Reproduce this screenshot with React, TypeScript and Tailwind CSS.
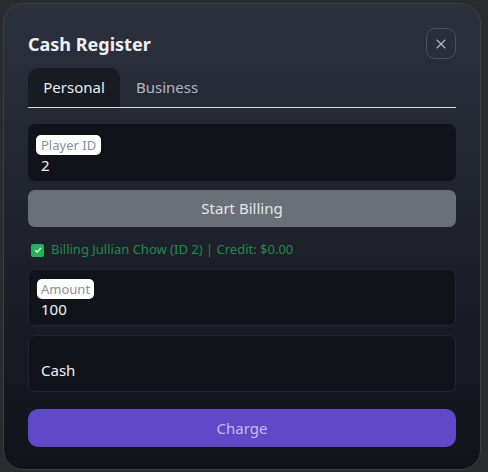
import React from "react";
import { X } from "lucide-react";

export default function App() {
  return (
    <div
      className="w-[488px] h-[472px] bg-[#2a2b2d] p-[3px] pr-[7px] pb-[2px]"
      style={{ fontFamily: '"Noto Sans", "Open Sans", sans-serif' }}
    >
      <div className="h-full rounded-[20px] border border-[#3a3e48] bg-gradient-to-b from-[#2c313e] to-[#11131a] px-6 pt-[24px] text-white">
        {/* Kopf */}
        <div className="flex items-center justify-between">
          <h1 className="text-[18px] font-bold leading-[26px] text-[#eef0f3]">Cash Register</h1>
          <button className="w-[30px] h-[31px] rounded-[9px] border border-[#4b505d] flex items-center justify-center text-[#b9bdc6]">
            <X className="w-4 h-4" strokeWidth={1.6} />
          </button>
        </div>

        {/* Reiter */}
        <div className="mt-[9px] flex items-end border-b border-[#d9dbe0]">
          <div className="w-[92px] h-[39px] rounded-t-[10px] bg-[#181b22] flex items-center justify-center text-[15px] text-[#eceef1]">
            Personal
          </div>
          <div className="px-4 h-[39px] flex items-center text-[15px] text-[#b3b7c0]">Business</div>
        </div>

        {/* Spieler-ID */}
        <div className="mt-4 h-[57px] rounded-[7px] bg-[#10131a] px-2 pt-2">
          <span className="inline-block rounded-[5px] bg-white px-[5px] text-[13px] leading-[20px] text-[#8a8f98]">Player ID</span>
          <div className="pl-[5px] text-[15px] leading-[18px] text-[#f2f3f5]">2</div>
        </div>

        <button className="mt-[9px] w-full h-[37px] rounded-[7px] bg-[#6a7077] text-[15px] text-[#e4e6e9]">
          Start Billing
        </button>

        <div className="mt-[14px] h-[18px] flex items-center gap-[7px] pl-[3px] text-[13px] text-[#1f8a4f]">
          <span className="w-[13px] h-[13px] rounded-[2px] bg-[#22b45a] flex items-center justify-center">
            <svg viewBox="0 0 12 12" className="w-[10px] h-[10px]">
              <path d="M2.5 6.2 5 8.5 9.5 3.5" fill="none" stroke="white" strokeWidth="1.6" />
            </svg>
          </span>
          <span>Billing Jullian Chow (ID 2) | Credit: $0.00</span>
        </div>

        {/* Betrag */}
        <div className="mt-[10px] h-[57px] rounded-[7px] border border-[#23262e] bg-[#10131a] px-2 pt-[6px]">
          <span className="inline-block rounded-[5px] bg-white px-[4px] text-[13px] leading-[20px] text-[#8a8f98]">Amount</span>
          <div className="pl-[4px] text-[15px] leading-[18px] text-[#f2f3f5]">100</div>
        </div>

        {/* Zahlungsart */}
        <div className="mt-[9px] h-[57px] rounded-[7px] border border-[#23262e] bg-[#10131a] px-3 flex items-end pb-[10px]">
          <span className="text-[15px] text-[#f2f3f5]">Cash</span>
        </div>

        <button className="mt-[17px] w-full h-[38px] rounded-[10px] bg-[#6049c6] text-[15px] text-[#c4bde6]">
          Charge
        </button>
      </div>
    </div>
  );
}
